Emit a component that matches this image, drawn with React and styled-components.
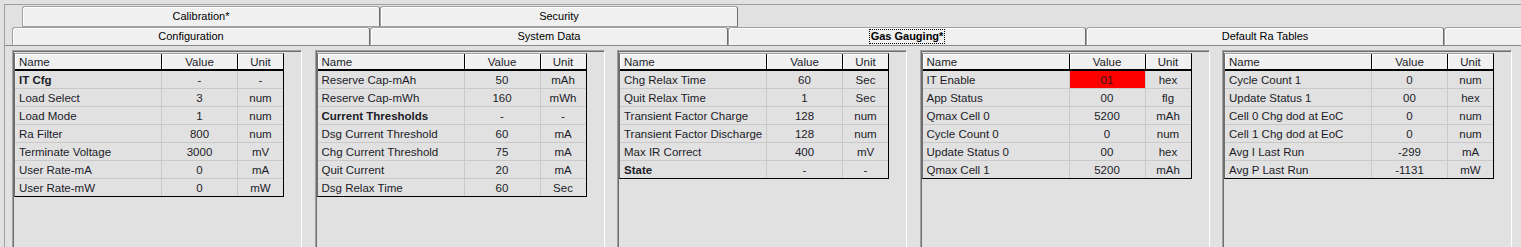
import React from 'react'
import styled, { createGlobalStyle, css } from 'styled-components'

const GlobalStyle = createGlobalStyle`
    html, body {
        margin: 0;
        padding: 0;
        background: #e1e1e1;
        overflow: hidden;
    }
    #root {
        width: 1521px;
        height: 247px;
    }
`

const Root = styled.div`
    width: 1521px;
    height: 247px;
    padding: 4px 0 0 4px;
    box-sizing: border-box;
    overflow: hidden;
    background: #e1e1e1;
`

const Frame = styled.div`
    height: 243px;
    border-top: 1px solid #a0a0a0;
    border-left: 1px solid #a0a0a0;
    box-sizing: border-box;
    display: flex;
    flex-direction: column;
    overflow: hidden;
`

const TabRow = styled.div`
    display: flex;
    flex-shrink: 0;
    white-space: nowrap;
    ${(props) =>
        props.back
            ? css`
                  padding: 1px 0 0 17px;
                  height: 22px;
              `
            : css`
                  padding-left: 7px;
                  height: 19px;
                  border-bottom: 1px solid #8a8a8a;
              `}
    box-sizing: border-box;
`

const Tab = styled.div`
    flex: 0 0 358px;
    box-sizing: border-box;
    height: 100%;
    background: #f0f0f0;
    border: 1px solid #a0a0a0;
    border-right-color: #6e6e6e;
    border-radius: 3px 3px 0 0;
    box-shadow: inset 1px 1px 0 #ffffff;
    display: flex;
    align-items: center;
    justify-content: center;
    font-family: 'Liberation Sans', Arial, sans-serif;
    font-size: 11px;
    color: #000;
    ${(props) =>
        props.front &&
        css`
            border-bottom: none;
        `}
`

const TabLabel = styled.span`
    padding: 0 1px;
    line-height: 13px;
    ${(props) =>
        props.selected &&
        css`
            font-weight: bold;
            border: 1px dotted #000;
        `}
`

const Panels = styled.div`
    display: flex;
    gap: 12.5px;
    padding: 4px 0 0 7px;
    flex: 1;
`

const Panel = styled.div`
    flex: 0 0 290px;
    box-sizing: border-box;
    border-top: 1px solid #a0a0a0;
    border-left: 1px solid #a0a0a0;
    border-right: 1px solid #ffffff;
    box-shadow: inset 1px 1px 0 #6e6e6e;
    padding: 2px 0 0 1px;
`

const Table = styled.div`
    width: 270px;
    box-sizing: border-box;
    border: 1px solid #000;
    border-left-color: #6e6e6e;
    border-top-color: #a0a0a0;
    font-family: 'Liberation Sans', Arial, sans-serif;
    font-size: 11.5px;
    color: #1c1c28;
`

const Row = styled.div`
    display: grid;
    grid-template-columns: 147px 76px 45px;
    height: 18px;
    box-sizing: border-box;
    border-bottom: 1px solid #c9c9c9;
    background: #e1e1e1;
    &:last-child {
        border-bottom: none;
        height: 17px;
    }
    ${(props) =>
        props.head &&
        css`
            height: 17px;
            background: #f0f0f0;
            border-bottom: 2px solid #000;
        `}
`

const Cell = styled.div`
    box-sizing: border-box;
    display: flex;
    align-items: center;
    justify-content: ${(props) => (props.left ? 'flex-start' : 'center')};
    padding-left: ${(props) => (props.left ? '4px' : '0')};
    white-space: nowrap;
    overflow: hidden;
    border-right: 1px solid ${(props) => (props.head ? '#000' : '#c9c9c9')};
    font-weight: ${(props) => (props.bold ? 'bold' : 'normal')};
    background: ${(props) => (props.alert ? '#ff0000' : 'transparent')};
    ${(props) =>
        props.head &&
        css`
            box-shadow: inset 1px 1px 0 #ffffff;
        `}
    &:last-child {
        border-right: none;
    }
`

const backTabs = ['Calibration*', 'Security']
const frontTabs = [
    'Configuration',
    'System Data',
    'Gas Gauging*',
    'Default Ra Tables',
    '',
]

const panels = [
    [
        ['IT Cfg', '-', '-', true],
        ['Load Select', '3', 'num'],
        ['Load Mode', '1', 'num'],
        ['Ra Filter', '800', 'num'],
        ['Terminate Voltage', '3000', 'mV'],
        ['User Rate-mA', '0', 'mA'],
        ['User Rate-mW', '0', 'mW'],
    ],
    [
        ['Reserve Cap-mAh', '50', 'mAh'],
        ['Reserve Cap-mWh', '160', 'mWh'],
        ['Current Thresholds', '-', '-', true],
        ['Dsg Current Threshold', '60', 'mA'],
        ['Chg Current Threshold', '75', 'mA'],
        ['Quit Current', '20', 'mA'],
        ['Dsg Relax Time', '60', 'Sec'],
    ],
    [
        ['Chg Relax Time', '60', 'Sec'],
        ['Quit Relax Time', '1', 'Sec'],
        ['Transient Factor Charge', '128', 'num'],
        ['Transient Factor Discharge', '128', 'num'],
        ['Max IR Correct', '400', 'mV'],
        ['State', '-', '-', true],
    ],
    [
        ['IT Enable', '01', 'hex', false, true],
        ['App Status', '00', 'flg'],
        ['Qmax Cell 0', '5200', 'mAh'],
        ['Cycle Count 0', '0', 'num'],
        ['Update Status 0', '00', 'hex'],
        ['Qmax Cell 1', '5200', 'mAh'],
    ],
    [
        ['Cycle Count 1', '0', 'num'],
        ['Update Status 1', '00', 'hex'],
        ['Cell 0 Chg dod at EoC', '0', 'num'],
        ['Cell 1 Chg dod at EoC', '0', 'num'],
        ['Avg I Last Run', '-299', 'mA'],
        ['Avg P Last Run', '-1131', 'mW'],
    ],
]

function DataTable({ rows }) {
    return (
        <Table>
            <Row head>
                <Cell head left>
                    Name
                </Cell>
                <Cell head>Value</Cell>
                <Cell head>Unit</Cell>
            </Row>
            {rows.map(([name, value, unit, bold, alert]) => (
                <Row key={name}>
                    <Cell left bold={bold}>
                        {name}
                    </Cell>
                    <Cell alert={alert}>{value}</Cell>
                    <Cell>{unit}</Cell>
                </Row>
            ))}
        </Table>
    )
}

export default function App() {
    return (
        <Root>
            <GlobalStyle />
            <Frame>
                <TabRow back>
                    {backTabs.map((t) => (
                        <Tab key={t}>
                            <TabLabel>{t}</TabLabel>
                        </Tab>
                    ))}
                </TabRow>
                <TabRow>
                    {frontTabs.map((t, i) => (
                        <Tab key={i} front>
                            <TabLabel selected={t === 'Gas Gauging*'}>
                                {t}
                            </TabLabel>
                        </Tab>
                    ))}
                </TabRow>
                <Panels>
                    {panels.map((rows, i) => (
                        <Panel key={i}>
                            <DataTable rows={rows} />
                        </Panel>
                    ))}
                </Panels>
            </Frame>
        </Root>
    )
}
